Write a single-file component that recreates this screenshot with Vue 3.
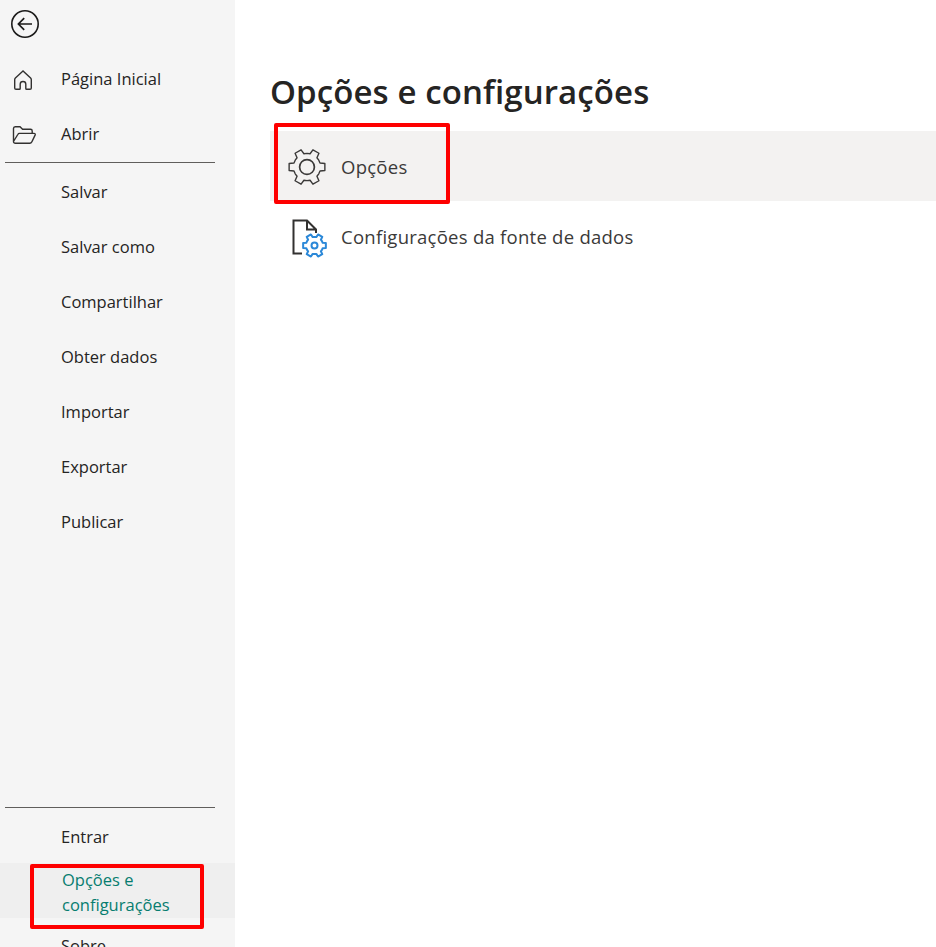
<script setup>
const openItems = [
  { label: 'Página Inicial', icon: 'home' },
  { label: 'Abrir', icon: 'folder' },
]
const fileItems = ['Salvar', 'Salvar como', 'Compartilhar', 'Obter dados', 'Importar', 'Exportar', 'Publicar']

function gear(cx, cy, outer, inner, spread) {
  const pts = []
  for (let k = 0; k < 6; k++) {
    const a = k * 60
    for (const [d, r] of [[-30, inner], [-spread - 6, inner], [-spread, outer], [spread, outer], [spread + 6, inner]]) {
      const t = ((a + d) * Math.PI) / 180
      pts.push((cx + r * Math.cos(t)).toFixed(2) + ' ' + (cy + r * Math.sin(t)).toFixed(2))
    }
  }
  return 'M' + pts.join('L') + 'Z'
}
const bigGear = gear(19, 19, 18.2, 13.6, 11)
const smallGear = gear(12.5, 12.5, 11.6, 8.6, 12)
</script>

<template>
  <div class="page">
    <aside class="side">
      <button class="back" aria-label="Voltar">
        <svg width="30" height="30" viewBox="0 0 30 30" fill="none" stroke="#1b1a19">
          <circle cx="15" cy="15" r="13.2" stroke-width="1.6" />
          <path d="M22 15H8.5M14.2 9.2L8.4 15L14.2 20.8" stroke-width="1.7" />
        </svg>
      </button>
      <div v-for="it in openItems" :key="it.label" class="item top">
        <span class="ico">
          <svg v-if="it.icon === 'home'" width="24" height="24" viewBox="0 0 24 24" fill="none" stroke="#323130" stroke-width="1.4">
            <path d="M12 3L4.4 10C3.9 10.5 3.7 11 3.7 11.7V20C3.7 20.8 4.2 21.3 5 21.3H8.4C8.9 21.3 9.2 21 9.2 20.5V16.2C9.2 14.6 10.4 13.5 12 13.5C13.6 13.5 14.8 14.6 14.8 16.2V20.5C14.8 21 15.1 21.3 15.6 21.3H19C19.8 21.3 20.3 20.8 20.3 20V11.7C20.3 11 20.1 10.5 19.6 10Z" />
          </svg>
          <svg v-else width="26" height="24" viewBox="0 0 26 24" fill="none" stroke="#323130" stroke-width="1.4">
            <path d="M2.5 15V5.5C2.5 4.4 3.2 3.7 4.2 3.7H9L11.6 6.3H19.5C20.6 6.3 21.2 7 21.2 8V10.4M2.5 18.5L6.8 11.5C7.2 10.8 7.7 10.4 8.4 10.4H23C24 10.4 24.5 11.2 24.1 12.1L20.9 18.8C20.4 19.8 19.8 20.3 18.8 20.3H4.4C3.2 20.3 2.5 19.6 2.5 18.5V14.5" />
          </svg>
        </span>
        <span>{{ it.label }}</span>
      </div>
      <hr class="rule" />
      <div v-for="label in fileItems" :key="label" class="item low">{{ label }}</div>
      <div class="bottom">
        <hr class="rule" />
        <div class="item low">Entrar</div>
        <div class="item current">Opções e<br />configurações</div>
        <div class="item">Sobre</div>
      </div>
    </aside>

    <main class="main">
      <h1 class="title">Opções e configurações</h1>
      <div class="row active">
        <svg class="row-ico" width="38" height="38" viewBox="0 0 38 38" fill="none" stroke="#3b3a39" stroke-width="1.4" stroke-linejoin="round">
          <path :d="bigGear" />
          <circle cx="19" cy="19" r="7.4" stroke-width="1.7" />
        </svg>
        <span>Opções</span>
      </div>
      <div class="row">
        <span class="doc">
          <svg width="27" height="36" viewBox="0 0 27 36" fill="none" stroke="#323130" stroke-width="2">
            <path d="M10 34.5H1.5V1.5H15L24 10.5V14M15 1.5V10.5H24" />
          </svg>
          <svg class="doc-gear" width="25" height="25" viewBox="0 0 25 25" fill="none" stroke="#2b88d8" stroke-width="2" stroke-linejoin="round">
            <path :d="smallGear" />
            <circle cx="12.5" cy="12.5" r="3" />
          </svg>
        </span>
        <span>Configurações da fonte de dados</span>
      </div>
    </main>

    <div class="mark mark-opt"></div>
    <div class="mark mark-side"></div>
  </div>
</template>

<style>
html, body { margin: 0; background: #fff; overflow: hidden; }
</style>

<style scoped>
.page {
  position: relative;
  display: flex;
  width: 936px;
  height: 947px;
  overflow: hidden;
  font-family: "Open Sans", "Noto Sans", sans-serif;
  color: #323130;
}
.side {
  flex: 0 0 235px;
  display: flex;
  flex-direction: column;
  background: #f5f5f5;
  height: 947px;
  overflow: hidden;
}
.back {
  display: flex;
  align-items: center;
  flex: none;
  box-sizing: border-box;
  height: 52px;
  padding: 0 0 4px 10px;
  border: 0;
  background: none;
}
.item {
  flex: none;
  box-sizing: border-box;
  display: flex;
  align-items: center;
  height: 55px;
  padding-left: 61px;
  position: relative;
  font-size: 16.5px;
  color: #252423;
}
.item.top { padding-bottom: 2px; }
.item.low { padding-top: 2px; }
.ico {
  position: absolute;
  left: 11px;
  top: 50%;
  transform: translateY(-50%);
  display: flex;
}
.rule {
  flex: none;
  width: 210px;
  height: 1px;
  margin: 0 0 0 5px;
  border: 0;
  background: #605e5c;
}
.bottom {
  margin-top: auto;
  flex: none;
  height: 140px;
}
.item.current {
  display: block;
  padding: 4px 0 0 62px;
  background: #efefef;
  color: #077d6f;
  line-height: 25px;
}
.main { flex: 1; padding: 0 0 0 35px; min-width: 0; }
.title {
  margin: 0;
  padding-top: 70px;
  height: 61px;
  font-size: 33px;
  line-height: 44px;
  font-weight: 600;
  letter-spacing: 0.1px;
  color: #252423;
  white-space: nowrap;
}
.row {
  display: flex;
  align-items: center;
  height: 70px;
  padding: 1px 0 0 18px;
  box-sizing: border-box;
  gap: 16px;
  font-size: 18.5px;
  letter-spacing: 0.26px;
  color: #3b3a39;
  white-space: nowrap;
}
.row.active { background: #f3f2f1; gap: 15px; }
.row-ico { flex: none; }
.doc {
  position: relative;
  flex: none;
  box-sizing: border-box;
  display: flex;
  width: 37px;
  padding-left: 4px;
}
.doc-gear {
  position: absolute;
  left: 14px;
  top: 14px;
}
.mark {
  position: absolute;
  box-sizing: border-box;
  border: 4px solid #fe0000;
  border-radius: 2px;
}
.mark-opt { left: 274px; top: 123px; width: 176px; height: 81px; }
.mark-side { left: 30px; top: 864px; width: 174px; height: 65px; }
</style>
